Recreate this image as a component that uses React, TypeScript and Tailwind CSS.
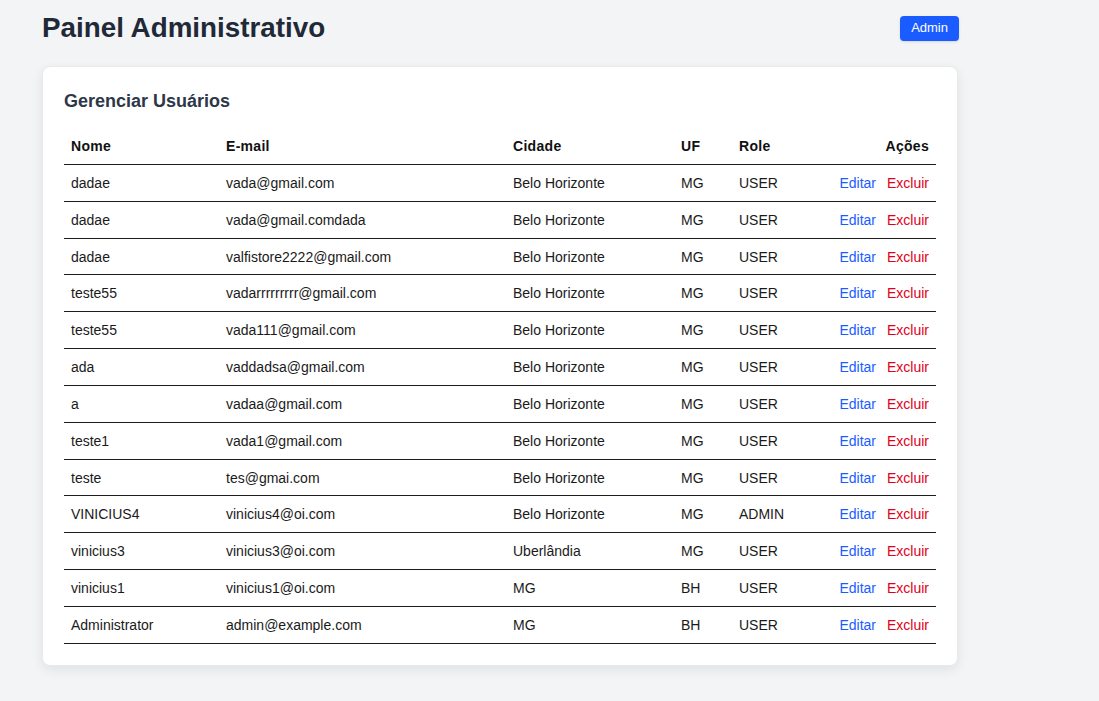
const users = [
  { nome: 'dadae', email: 'vada@gmail.com', cidade: 'Belo Horizonte', uf: 'MG', role: 'USER' },
  { nome: 'dadae', email: 'vada@gmail.comdada', cidade: 'Belo Horizonte', uf: 'MG', role: 'USER' },
  { nome: 'dadae', email: 'valfistore2222@gmail.com', cidade: 'Belo Horizonte', uf: 'MG', role: 'USER' },
  { nome: 'teste55', email: 'vadarrrrrrrrr@gmail.com', cidade: 'Belo Horizonte', uf: 'MG', role: 'USER' },
  { nome: 'teste55', email: 'vada111@gmail.com', cidade: 'Belo Horizonte', uf: 'MG', role: 'USER' },
  { nome: 'ada', email: 'vaddadsa@gmail.com', cidade: 'Belo Horizonte', uf: 'MG', role: 'USER' },
  { nome: 'a', email: 'vadaa@gmail.com', cidade: 'Belo Horizonte', uf: 'MG', role: 'USER' },
  { nome: 'teste1', email: 'vada1@gmail.com', cidade: 'Belo Horizonte', uf: 'MG', role: 'USER' },
  { nome: 'teste', email: 'tes@gmai.com', cidade: 'Belo Horizonte', uf: 'MG', role: 'USER' },
  { nome: 'VINICIUS4', email: 'vinicius4@oi.com', cidade: 'Belo Horizonte', uf: 'MG', role: 'ADMIN' },
  { nome: 'vinicius3', email: 'vinicius3@oi.com', cidade: 'Uberlândia', uf: 'MG', role: 'USER' },
  { nome: 'vinicius1', email: 'vinicius1@oi.com', cidade: 'MG', uf: 'BH', role: 'USER' },
  { nome: 'Administrator', email: 'admin@example.com', cidade: 'MG', uf: 'BH', role: 'USER' },
]

export default function App() {
  return (
    <div className="min-h-[701px] bg-[#f3f4f6] font-['Liberation_Sans',Arial,sans-serif]">
      <div className="ml-[42px] w-[917px] pt-[12px]">
        {/* Header */}
        <div className="flex items-center justify-between">
          <h1 className="text-[27.8px] leading-[32px] font-bold text-[#1f2937]">Painel Administrativo</h1>
          <button className="h-[25px] px-[11px] rounded-[4px] bg-[#1a5cff] text-white text-[13px] shadow-sm">
            Admin
          </button>
        </div>

        {/* Users card */}
        <section className="mt-[22px] w-[916px] bg-white rounded-lg border border-[#e9eaec] shadow-[0_4px_12px_rgba(0,0,0,0.08)] px-[21px] pt-[24px] pb-[21px]">
          <h2 className="text-[18px] leading-[21px] font-bold text-[#2d3748] mb-[16px]">Gerenciar Usuários</h2>

          <table className="w-full table-fixed border-collapse text-[14px] text-[#1a1a1a]">
            <thead>
              <tr className="border-b border-[#1c1c1c] text-[#111]">
                <th className="w-[155px] px-[7px] pt-[11px] pb-[9px] leading-[15.85px] text-left font-bold tracking-[0.3px]">Nome</th>
                <th className="w-[287px] px-[7px] pt-[11px] pb-[9px] leading-[15.85px] text-left font-bold tracking-[0.3px]">E-mail</th>
                <th className="w-[168px] px-[7px] pt-[11px] pb-[9px] leading-[15.85px] text-left font-bold tracking-[0.3px]">Cidade</th>
                <th className="w-[58px] px-[7px] pt-[11px] pb-[9px] leading-[15.85px] text-left font-bold tracking-[0.3px]">UF</th>
                <th className="w-[100px] px-[7px] pt-[11px] pb-[9px] leading-[15.85px] text-left font-bold tracking-[0.3px]">Role</th>
                <th className="px-[7px] pt-[11px] pb-[9px] leading-[15.85px] text-right font-bold tracking-[0.3px]">Ações</th>
              </tr>
            </thead>
            <tbody>
              {users.map((u, i) => (
                <tr key={i} className="border-b border-[#1c1c1c]">
                  <td className="px-[7px] pt-[11px] pb-[9px] leading-[15.85px]">{u.nome}</td>
                  <td className="px-[7px] pt-[11px] pb-[9px] leading-[15.85px]">{u.email}</td>
                  <td className="px-[7px] pt-[11px] pb-[9px] leading-[15.85px]">{u.cidade}</td>
                  <td className="px-[7px] pt-[11px] pb-[9px] leading-[15.85px]">{u.uf}</td>
                  <td className="px-[7px] pt-[11px] pb-[9px] leading-[15.85px]">{u.role}</td>
                  <td className="px-[7px] pt-[11px] pb-[9px] leading-[15.85px] text-right whitespace-nowrap">
                    <span className="text-[#1a5cff] mr-[11px]">Editar</span>
                    <span className="text-[#e0001a]">Excluir</span>
                  </td>
                </tr>
              ))}
            </tbody>
          </table>
        </section>
      </div>
    </div>
  )
}
